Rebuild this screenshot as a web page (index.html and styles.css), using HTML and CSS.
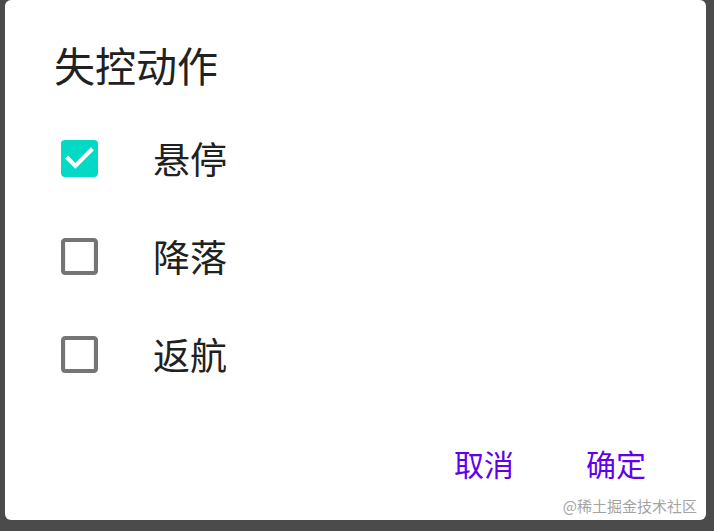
FILE: index.html
```html
<!DOCTYPE html>
<html lang="zh-CN">
  <head>
    <meta charset="UTF-8" />
    <meta name="viewport" content="width=device-width, initial-scale=1.0" />
    <title>失控动作</title>
    <link rel="stylesheet" href="styles.css">
  </head>
  <body>
    <div class="dialog">
      <h1 class="dialog-title">失控动作</h1>

      <ul class="option-list">
        <li class="option">
          <svg class="checkbox" viewBox="3 3 18 18">
            <rect class="box-fill" x="3" y="3" width="18" height="18" rx="2" />
            <path class="check" d="M10 17l-5-5 1.41-1.41L10 14.17l7.59-7.59L19 8l-9 9z" />
          </svg>
          <span class="option-label">悬停</span>
        </li>
        <li class="option">
          <svg class="checkbox" viewBox="3 3 18 18">
            <path class="box-line" d="M19 5v14H5V5h14m0-2H5c-1.11 0-2 .9-2 2v14c0 1.1.89 2 2 2h14c1.1 0 2-.9 2-2V5c0-1.1-.9-2-2-2z" />
          </svg>
          <span class="option-label">降落</span>
        </li>
        <li class="option">
          <svg class="checkbox" viewBox="3 3 18 18">
            <path class="box-line" d="M19 5v14H5V5h14m0-2H5c-1.11 0-2 .9-2 2v14c0 1.1.89 2 2 2h14c1.1 0 2-.9 2-2V5c0-1.1-.9-2-2-2z" />
          </svg>
          <span class="option-label">返航</span>
        </li>
      </ul>

      <div class="dialog-actions">
        <button class="text-button">取消</button>
        <button class="text-button">确定</button>
      </div>
    </div>

    <div class="watermark">@稀土掘金技术社区</div>
  </body>
</html>
```

FILE: styles.css
```css
body {
  margin: 0;
  background-color: #4b4b4b;
  font-family: "Noto Sans CJK SC", "Noto Sans", sans-serif;
  height: 531px;
  overflow: hidden;
}

.dialog {
  margin-left: 5px;
  width: 701px;
  height: 520px;
  background-color: #fff;
  border-radius: 6px;
  box-sizing: border-box;
  padding-top: 44px;
}

.dialog-title {
  margin: 0;
  padding-left: 49px;
  font-size: 41px;
  line-height: 40px;
  font-weight: normal;
  color: #212121;
}

.option-list {
  list-style: none;
  margin: 25px 0 0;
  padding: 0;
}

.option {
  display: flex;
  align-items: center;
  height: 98px;
  padding-left: 56px;
}

.checkbox {
  width: 37px;
  height: 37px;
  flex-shrink: 0;
}

.box-fill {
  fill: #03dac5;
}

.check {
  fill: #fff;
}

.box-line {
  fill: #757575;
}

.option-label {
  margin-left: 55px;
  font-size: 37px;
  line-height: 37px;
  color: #212121;
}

.dialog-actions {
  display: flex;
  justify-content: flex-end;
  gap: 72px;
  margin-top: 45px;
  padding-right: 60px;
}

.text-button {
  border: none;
  background: none;
  padding: 0;
  font-family: "Noto Sans CJK SC", "Noto Sans", sans-serif;
  font-size: 30px;
  line-height: 30px;
  color: #6200ee;
  cursor: pointer;
}

/* 水印 */
.watermark {
  position: absolute;
  top: 497px;
  right: 17px;
  font-size: 15px;
  line-height: 18px;
  color: #a3a3a3;
}
```
